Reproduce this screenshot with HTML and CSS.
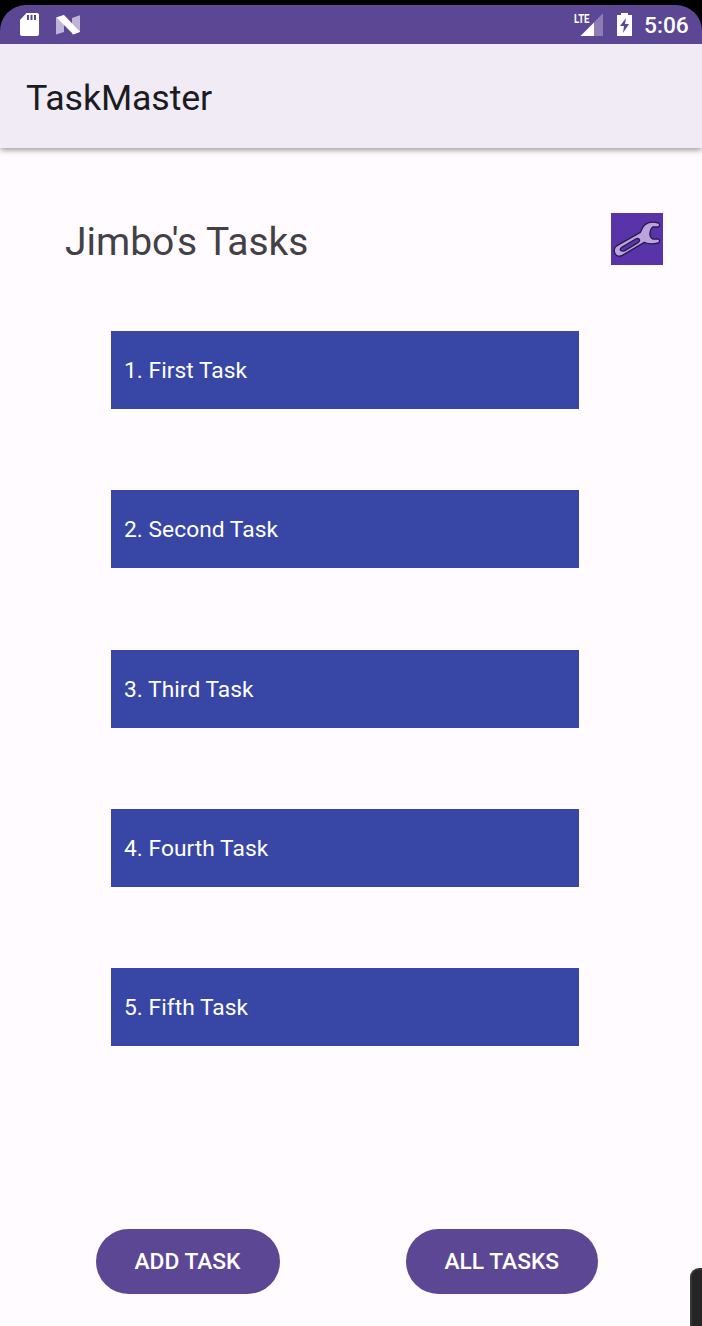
FILE: index.html
```html
<!DOCTYPE html>
<html lang="en">
<head>
<meta charset="utf-8">
<title>TaskMaster</title>
<link rel="stylesheet" href="styles.css">
</head>
<body>
<div class="phone">
  <div class="status">
    <svg class="sd" viewBox="0 0 20 24"><path fill="#fff" fill-rule="evenodd" d="M6.500 0H17Q19 0 19 2V21Q19 23 17 23H2Q0 23 0 21V7ZM7 2V7H9V2ZM10.500 2V7H12.500V2ZM14 2V7H16V2Z"/></svg>
    <svg class="nougat" viewBox="0 0 24 20"><path fill="#bfb3d8" d="M0 2.500 8 0V17L0 19.500ZM16 3 24 .3V17L16 19.500Z"/><path fill="#fff" d="M.5 2.500 8 0 24 16.700 17.500 19.500Z"/></svg>
    <span class="space"></span>
    <svg class="signal" viewBox="0 0 30 26"><path fill="#8d7db4" d="M29 1.300V24H20V10.300Z"/><path fill="#fff" d="M20 10.500V24H6.500Z"/><text class="lte" x="0" y="11" textLength="15.500" lengthAdjust="spacingAndGlyphs">LTE</text></svg>
    <svg class="battery" viewBox="0 0 15 23"><path fill="#fff" d="M4 0H11V2H15V23H0V2H4Z"/><path fill="#5c4795" d="M9 5 3 13H7L6 20 12 11H8Z"/></svg>
    <span class="time">5:06</span>
  </div>
  <header class="appbar">TaskMaster</header>
  <main class="content">
    <div class="heading">
      <h1>Jimbo's Tasks</h1>
      <svg class="settings" viewBox="33 39 156 156"><path fill="#5934a8" d="M33 39h156v156H33z"/><path fill="#b9a4dc" fill-rule="evenodd" stroke="#2b1851" stroke-width="4" stroke-linejoin="round" d="M175 69C160 65 145 67 136 73C127 79 126 89 121 97L51 137C42 142 41 153 45 161C49 169 58 171 67 166L133 127C144 133 164 132 175 129C180 126 180 119 175 117H158C152 114 149 106 150 98C151 90 154 84 158 81H175C180 79 180 71 175 69ZM64 143 107 117C117 112 123 122 114 128L76 151C64 157 56 149 64 143Z"/></svg>
    </div>
    <div class="tasks">
      <div class="task">1. First Task</div>
      <div class="task">2. Second Task</div>
      <div class="task">3. Third Task</div>
      <div class="task">4. Fourth Task</div>
      <div class="task">5. Fifth Task</div>
    </div>
    <div class="actions">
      <button class="add">ADD TASK</button>
      <button class="all">ALL TASKS</button>
    </div>
  </main>
  <div class="edge-tab"></div>
</div>
</body>
</html>
```
FILE: styles.css
```css
* { box-sizing: border-box; }
body { margin: 0; background: #000; font-family: Roboto, sans-serif; }
.phone { position: relative; width: 702px; height: 1326px; padding-top: 5px; overflow: hidden; display: flex; flex-direction: column; }
.status { position: relative; z-index: 1; height: 39px; flex: none; background: #5c4795; border-radius: 26px 26px 0 0; display: flex; align-items: flex-start; padding: 8px 13px 0 20px; }
.sd { width: 20px; height: 24px; }
.nougat { width: 24px; height: 20px; margin: 2px 0 0 16px; }
.space { flex: 1; }
.signal { width: 30px; height: 26px; margin-right: 13px; margin-top: -1px; }
.lte { font: 700 13px Roboto, sans-serif; fill: #fff; }
.battery { width: 15px; height: 23px; }
.time { width: 44px; margin-left: 12px; margin-right: 1px; font-size: 22.75px; font-weight: 500; line-height: 25px; color: #fff; white-space: nowrap; }
.appbar { position: relative; height: 104px; flex: none; background: #f0ebf5; color: #1c1b1f; font-size: 35.75px; letter-spacing: -.12px; line-height: 108px; padding-left: 26px; box-shadow: 0 2px 6px rgba(0, 0, 0, .4); }
.content { flex: 1; background: #fffbff; padding-top: 65px; display: flex; flex-direction: column; }
.heading { display: flex; justify-content: space-between; padding: 0 39px 0 65px; height: 52px; }
h1 { margin: 0; font-size: 39px; font-weight: 400; line-height: 59px; color: #434047; }
.settings { width: 52px; height: 52px; }
.tasks { display: flex; flex-direction: column; gap: 81.25px; margin: 66px 0 0 111px; width: 468px; }
.task { height: 78px; background: #3846a6; color: #fff; font-size: 22.75px; letter-spacing: .04px; line-height: 80px; padding-left: 13px; }
.actions { display: flex; gap: 126px; padding-left: 95.500px; margin-top: 182.500px; }
button { height: 65px; border: 0; border-radius: 33px; padding: 0; background: #5c4795; color: #fff; font: 500 22.75px/65px Roboto, sans-serif; }
.add { width: 184px; }
.all { width: 192.500px; }
.edge-tab { position: absolute; left: 690px; top: 1268px; width: 20px; height: 70px; background: #252525; border: 2px solid #373737; border-radius: 9px; }
```
